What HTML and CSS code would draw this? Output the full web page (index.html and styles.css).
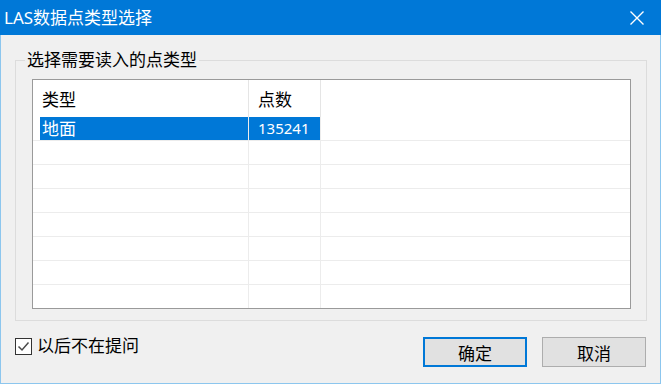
FILE: index.html
```html
<!DOCTYPE html>
<html lang="zh-CN">
<head>
    <meta charset="UTF-8">
    <title>LAS数据点类型选择</title>
    <link rel="stylesheet" href="styles.css">
</head>
<body>
    <div class="dialog">
        <!-- 标题栏 -->
        <div class="titlebar">
            <span class="title">LAS数据点类型选择</span>
            <button class="close" type="button">
                <svg width="14" height="14" viewBox="0 0 14 14">
                    <path d="M0.5 0.5 L13.5 13.5 M13.5 0.5 L0.5 13.5" stroke="#fff" stroke-width="1.4" fill="none"/>
                </svg>
            </button>
        </div>

        <div class="content">
            <fieldset class="group">
                <legend>选择需要读入的点类型</legend>
                <div class="list">
                    <table>
                        <thead>
                            <tr>
                                <th class="col-type"><div class="cell">类型</div></th>
                                <th class="col-count"><div class="cell">点数</div></th>
                                <th class="col-fill"></th>
                            </tr>
                        </thead>
                        <tbody>
                            <tr class="selected">
                                <td class="col-type"><div class="cell">地面</div></td>
                                <td class="col-count"><div class="cell num">135241</div></td>
                                <td class="col-fill"></td>
                            </tr>
                            <tr><td class="col-type"></td><td class="col-count"></td><td class="col-fill"></td></tr>
                            <tr><td class="col-type"></td><td class="col-count"></td><td class="col-fill"></td></tr>
                            <tr><td class="col-type"></td><td class="col-count"></td><td class="col-fill"></td></tr>
                            <tr><td class="col-type"></td><td class="col-count"></td><td class="col-fill"></td></tr>
                            <tr><td class="col-type"></td><td class="col-count"></td><td class="col-fill"></td></tr>
                            <tr><td class="col-type"></td><td class="col-count"></td><td class="col-fill"></td></tr>
                            <tr><td class="col-type"></td><td class="col-count"></td><td class="col-fill"></td></tr>
                        </tbody>
                    </table>
                </div>
            </fieldset>

            <div class="footer">
                <label class="check">
                    <span class="box">
                        <svg width="15" height="15" viewBox="0 0 15 15">
                            <path d="M2.5 7.5 L6 11 L12.5 3.5" stroke="#4a4a4a" stroke-width="1.5" fill="none"/>
                        </svg>
                    </span>
                    以后不在提问
                </label>
                <div class="buttons">
                    <button class="btn primary" type="button">确定</button>
                    <button class="btn" type="button">取消</button>
                </div>
            </div>
        </div>
    </div>
</body>
</html>
```

FILE: styles.css
```css
body {
    margin: 0;
    font-family: "Noto Sans", "Noto Sans CJK SC", sans-serif;
    font-size: 17px;
    color: #000;
}

.dialog {
    width: 661px;
    height: 384px;
    display: flex;
    flex-direction: column;
}

/* 标题栏 */
.titlebar {
    height: 35px;
    background-color: #0078d7;
    color: #fff;
    display: flex;
    align-items: center;
    justify-content: space-between;
    padding-left: 4px;
}

.title {
    line-height: 20px;
}

.close {
    width: 46px;
    height: 35px;
    margin-right: 1px;
    border: none;
    padding: 0;
    background: transparent;
    display: flex;
    align-items: center;
    justify-content: center;
}

.content {
    flex: 1;
    background-color: #f0f0f0;
    border: 1px solid #8cc6ee;
    border-top: none;
}

/* 分组框 */
.group {
    margin: 16px 13px 0 14px;
    padding: 10px 15px 11px 16px;
    border: 1px solid #dcdcdc;
    min-width: 0;
}

.group legend {
    margin-left: -7px;
    padding: 0 2px;
    line-height: 18px;
}

/* 列表 */
.list {
    height: 228px;
    border: 1px solid #9a9a9a;
    background-color: #fff;
    overflow: hidden;
}

.list table {
    width: 100%;
    table-layout: fixed;
    border-collapse: separate;
    border-spacing: 0;
}

.list th,
.list td {
    padding: 0;
    font-weight: normal;
    text-align: left;
}

.list th.col-type,
.list th.col-count {
    border-right: 1px solid #e5e5e5;
}

.list td {
    border-bottom: 1px solid #ececec;
}

.list td.col-type,
.list td.col-count {
    border-right: 1px solid #ececec;
}

.col-type {
    width: 215px;
}

.col-count {
    width: 71px;
}

.cell {
    height: 23px;
    line-height: 23px;
    white-space: nowrap;
}

.col-type .cell {
    margin-left: 7px;
    padding-left: 2px;
}

.col-count .cell {
    padding-left: 9px;
}

th .cell {
    height: 37px;
    box-sizing: border-box;
    padding-top: 11px;
    line-height: 17px;
}

td {
    height: 23px;
}

.num {
    font-size: 15px;
}

.selected .cell {
    background-color: #0078d7;
    color: #fff;
}

/* 底部 */
.footer {
    display: flex;
    justify-content: space-between;
    align-items: flex-start;
    margin-top: 16px;
    padding: 0 14px;
}

.check {
    display: flex;
    align-items: center;
    line-height: 18px;
}

.box {
    width: 15px;
    height: 15px;
    border: 1px solid #333;
    background-color: #fff;
    margin-right: 5px;
    display: flex;
}

.buttons {
    display: flex;
    gap: 15px;
}

.btn {
    width: 104px;
    height: 30px;
    padding: 0;
    font-family: inherit;
    font-size: 17px;
    background-color: #e1e1e1;
    border: 1px solid #adadad;
    color: #000;
}

.btn.primary {
    border: 2px solid #0078d7;
}
```
